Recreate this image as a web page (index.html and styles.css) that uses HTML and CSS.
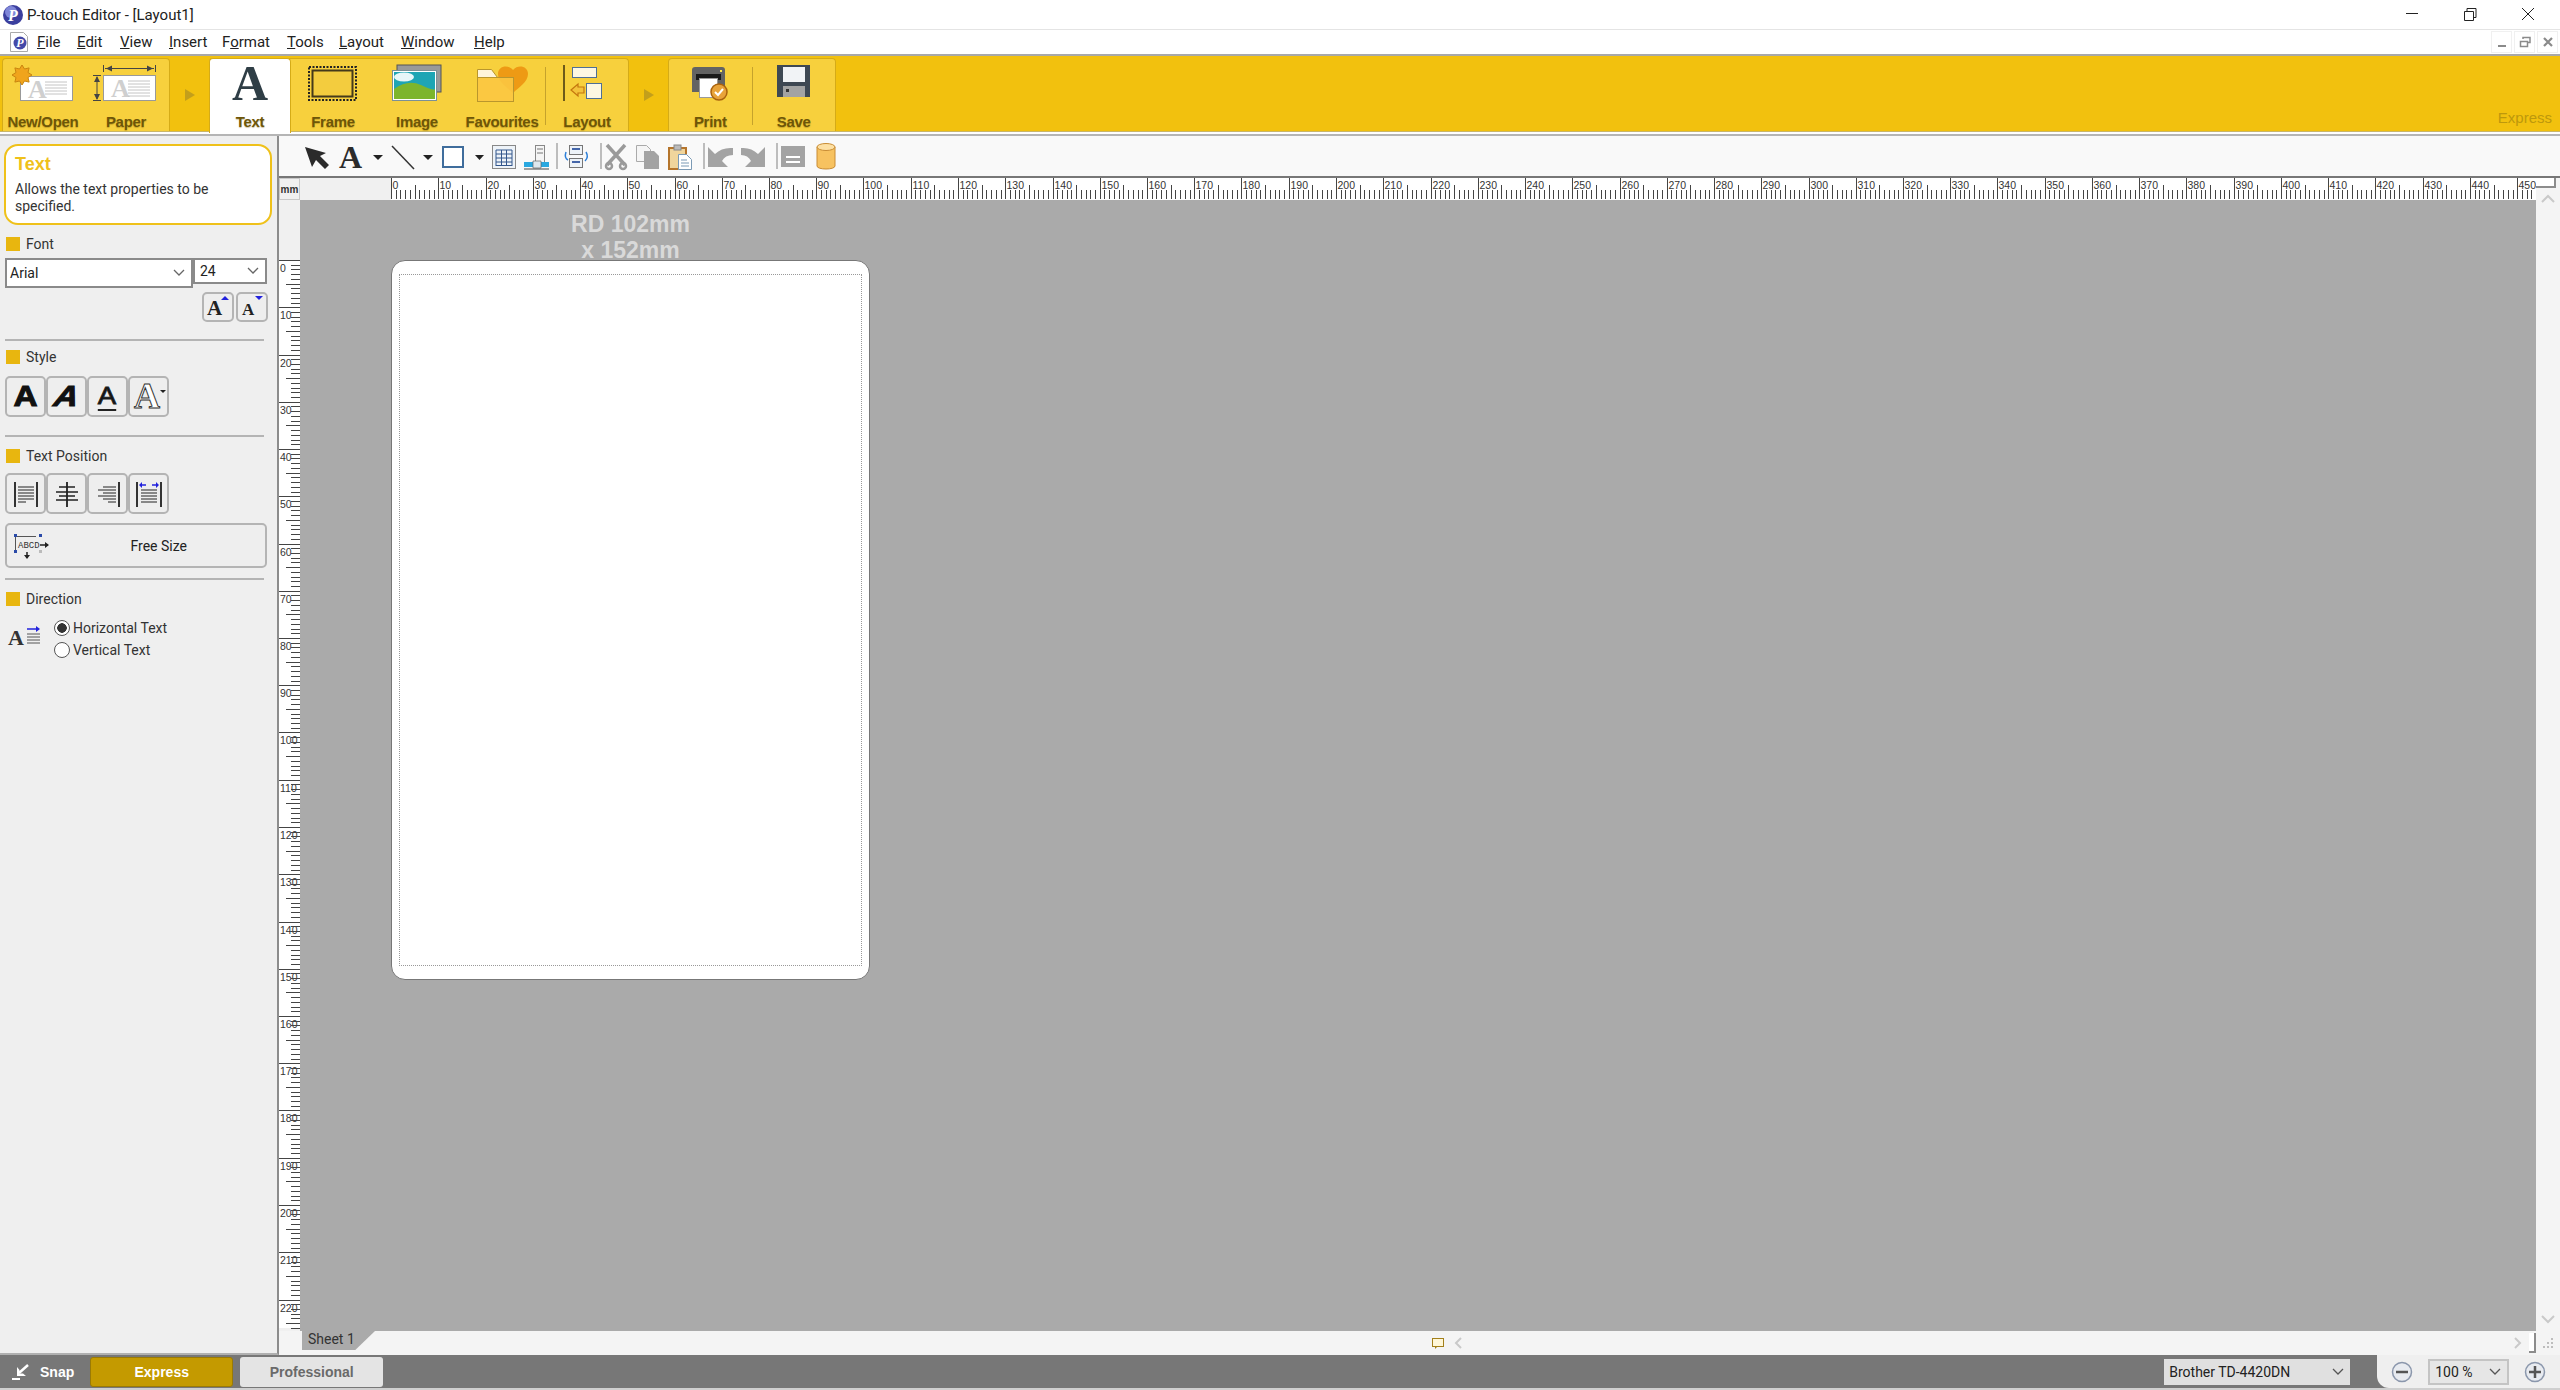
FILE: index.html
```html
<!DOCTYPE html>
<html lang="en">
<head>
    <meta charset="UTF-8">
    <title>P-touch Editor - [Layout1]</title>
    <link rel="stylesheet" href="styles.css">
</head>
<body>
    <div class="titlebar">
        <svg class="app-icon" width="22" height="22" viewBox="0 0 22 22">
            <circle cx="11" cy="11" r="10" fill="#3b3f9e"/>
            <circle cx="9" cy="8" r="6" fill="#7f86d8"/>
            <text x="11" y="17" class="app-p" text-anchor="middle">P</text>
        </svg>
        <span class="title-text">P-touch Editor - [Layout1]</span>
        <div class="win-controls">
            <svg width="58" height="29" viewBox="0 0 58 29"><path d="M23 13.5h12" stroke="#222" fill="none"/></svg>
            <svg width="58" height="29" viewBox="0 0 58 29"><path d="M23.5 11.5h9v9h-9zM26 11v-2.500h9v9h-2.500" stroke="#222" fill="none"/></svg>
            <svg width="58" height="29" viewBox="0 0 58 29"><path d="M23 8l12 12M35 8l-12 12" stroke="#222" fill="none"/></svg>
        </div>
    </div>

    <div class="menubar">
        <svg class="doc-icon" width="18" height="20" viewBox="0 0 18 20">
            <path d="M.5.500h13l4 4v15h-17z" fill="#fff" stroke="#aaa"/>
            <circle cx="10" cy="11" r="6.500" fill="#4449a8"/>
            <text x="10" y="15" class="doc-p" text-anchor="middle">P</text>
        </svg>
        <a class="menu-item menu-file"><u>F</u>ile</a>
        <a class="menu-item menu-edit"><u>E</u>dit</a>
        <a class="menu-item menu-view"><u>V</u>iew</a>
        <a class="menu-item menu-insert"><u>I</u>nsert</a>
        <a class="menu-item menu-format">F<u>o</u>rmat</a>
        <a class="menu-item menu-tools"><u>T</u>ools</a>
        <a class="menu-item menu-layout"><u>L</u>ayout</a>
        <a class="menu-item menu-window"><u>W</u>indow</a>
        <a class="menu-item"><u>H</u>elp</a>
        <div class="mdi-controls">
            <div class="mdi-btn"><svg width="12" height="12" viewBox="0 0 12 12"><path d="M2 10h8" stroke="#8a8a8a" stroke-width="2"/></svg></div>
            <div class="mdi-btn"><svg width="12" height="12" viewBox="0 0 12 12"><path d="M1.500 5.500h7v5h-7zM4 3V1.500h7v5H9" stroke="#8a8a8a" stroke-width="1.500" fill="none"/></svg></div>
            <div class="mdi-btn"><svg width="12" height="12" viewBox="0 0 12 12"><path d="M2 2l8 8M10 2l-8 8" stroke="#8a8a8a" stroke-width="2.200"/></svg></div>
        </div>
    </div>

    <div class="ribbon">
        <div class="rgroup rgroup-first">
            <div class="rbtn rbtn-new">
                <svg width="62" height="38" viewBox="0 0 62 38">
                    <rect x="8.500" y="11.500" width="52" height="24" fill="#fff" stroke="#999"/>
                    <text x="16" y="33" class="ico-a-grey">A</text>
                    <path d="M33 17h22M33 20h22M33 23h22M33 26h22M33 29h22" stroke="#c4c4c4"/>
                    <path d="M20 10l-4 2.500 1.100 4.600-4.600-1.100L10 20l-2.500-4-4.600 1.100L4 12.500 0 10l4-2.500-1.100-4.600L7.500 4 10 0l2.500 4 4.600-1.100L16 7.500z" fill="#f0a41c" stroke="#c98510"/>
                </svg>
                <span class="rbtn-label">New/Open</span>
            </div>
            <div class="rbtn rbtn-paper">
                <svg width="66" height="38" viewBox="0 0 66 38">
                    <rect x="10.500" y="10.500" width="52" height="25" fill="#fff" stroke="#999"/>
                    <text x="18" y="32" class="ico-a-grey">A</text>
                    <path d="M35 16h22M35 19h22M35 22h22M35 25h22M35 28h22M35 31h22" stroke="#c4c4c4"/>
                    <path d="M10.500 0v7M62.500 0v7M12 3.500h49M0 10.500h8M0 35.500h8M4 12v22" stroke="#444"/>
                    <path d="M13 3.500l6-3v6zM60 3.500l-6-3v6zM4 11l-3 6h6zM4 35l-3-6h6z" fill="#444"/>
                </svg>
                <span class="rbtn-label">Paper</span>
            </div>
        </div>
        <div class="rarrow"></div>
        <div class="rgroup rgroup-main">
            <div class="rbtn rbtn-text active">
                <svg width="44" height="38" viewBox="0 0 44 38"><text x="22" y="35" class="ico-big-a" text-anchor="middle">A</text></svg>
                <span class="rbtn-label">Text</span>
            </div>
            <div class="rbtn rbtn-frame">
                <svg width="52" height="38" viewBox="0 0 52 38">
                    <rect x="2" y="2" width="47" height="33" fill="none" stroke="#222" stroke-width="2" stroke-dasharray="2 1.500"/>
                    <rect x="5.500" y="5.500" width="40" height="26" fill="#f3cc3e" stroke="#44391a" stroke-width="2"/>
                </svg>
                <span class="rbtn-label">Frame</span>
            </div>
            <div class="rbtn rbtn-image">
                <svg width="52" height="38" viewBox="0 0 52 38">
                    <rect x="6" y="0" width="44" height="27" fill="#999" stroke="#555"/>
                    <rect x="1.500" y="5.500" width="44" height="30" fill="#fff" stroke="#7c9096"/>
                    <rect x="3" y="7" width="41" height="27" fill="#1ea5b4"/>
                    <path d="M3 24q14-10 27-4t14 4v10H3z" fill="#7db52c"/>
                    <ellipse cx="13" cy="12" rx="10" ry="4.500" fill="#e8f6f8"/>
                </svg>
                <span class="rbtn-label">Image</span>
            </div>
            <div class="rbtn rbtn-fav">
                <svg width="50" height="38" viewBox="0 0 50 38">
                    <path d="M.5 4.500h14l6 8h-20z" fill="#fff4d8" stroke="#b9962d"/>
                    <path d="M36 28C30 22 21 17 21 9c0-8 10-10 15-4 5-6 15-4 15 4 0 8-9 13-15 19z" fill="#ee9a14"/>
                    <rect x=".5" y="12.500" width="36" height="24" fill="#fbc741" fill-opacity=".9" stroke="#b9962d"/>
                </svg>
                <span class="rbtn-label">Favourites</span>
            </div>
            <div class="rsep"></div>
            <div class="rbtn rbtn-layout">
                <svg width="50" height="38" viewBox="0 0 50 38">
                    <path d="M2 0v36" stroke="#6e5a1a" stroke-width="2"/>
                    <rect x="10.500" y="2.500" width="24" height="10" fill="#fdf7e2" stroke="#4f6f96"/>
                    <rect x="24.500" y="18.500" width="15" height="15" fill="#fdf7e2" stroke="#4f6f96"/>
                    <path d="M9 25l7-6v3h6v6h-6v3z" fill="#f3c23a" stroke="#c4760d" stroke-width="1.200"/>
                </svg>
                <span class="rbtn-label">Layout</span>
            </div>
        </div>
        <div class="rarrow"></div>
        <div class="rgroup rgroup-end">
            <div class="rbtn">
                <svg width="38" height="38" viewBox="0 0 38 38">
                    <path d="M1 5q0-3 3-3h27q3 0 3 3v22H1z" fill="#636363"/>
                    <rect x="5" y="9" width="25" height="6" fill="#1a1a1a"/>
                    <rect x="8.500" y="13.500" width="18" height="19" fill="#fff" stroke="#9a9a9a"/>
                    <rect x="29" y="5" width="2" height="2" fill="#ffe94a"/>
                    <circle cx="28" cy="27" r="8" fill="#e8a33a" stroke="#a9620d" stroke-width="1.500"/>
                    <path d="M24 27l3 3 5-6" fill="none" stroke="#fff" stroke-width="2"/>
                </svg>
                <span class="rbtn-label">Print</span>
            </div>
            <div class="rsep"></div>
            <div class="rbtn">
                <svg width="36" height="38" viewBox="0 0 36 38">
                    <rect x="1" y="0" width="33" height="32" fill="#3e4853"/>
                    <rect x="7" y="2" width="22" height="15" fill="#f1f3f6"/>
                    <rect x="7" y="21" width="22" height="11" fill="#a3a3a3"/>
                    <rect x="10" y="24" width="3" height="3" fill="#333"/>
                </svg>
                <span class="rbtn-label">Save</span>
            </div>
        </div>
        <span class="mode-tag">Express</span>
    </div>
    <div class="ribbon-rule"></div>

    <div class="main">
        <aside class="sidepanel">
            <div class="infobox">
                <div class="info-title">Text</div>
                <p class="info-desc">Allows the text properties to be specified.</p>
            </div>

            <div class="section-head section-font"><i></i>Font</div>
            <div class="font-row">
                <div class="combo combo-font">Arial<svg class="chev" width="12" height="8" viewBox="0 0 12 8"><path d="M1 1l5 5 5-5" fill="none" stroke="#666" stroke-width="1.300"/></svg></div>
                <div class="combo combo-size">24<svg class="chev" width="12" height="8" viewBox="0 0 12 8"><path d="M1 1l5 5 5-5" fill="none" stroke="#666" stroke-width="1.300"/></svg></div>
            </div>
            <div class="size-row">
                <div class="tbtn tbtn-size">
                    <svg width="28" height="26" viewBox="0 0 28 26"><text x="3" y="21" class="ico-a-big">A</text><path d="M17 6l4-4 4 4z" fill="#2222dd"/></svg>
                </div>
                <div class="tbtn tbtn-size">
                    <svg width="28" height="26" viewBox="0 0 28 26"><text x="4" y="21" class="ico-a-small">A</text><path d="M17 2l4 4 4-4z" fill="#2222dd"/></svg>
                </div>
            </div>
            <hr class="rule rule-font">

            <div class="section-head section-style"><i></i>Style</div>
            <div class="btn-row btn-row-style">
                <div class="tbtn"><span class="style-a">A</span></div>
                <div class="tbtn"><span class="style-a style-i">A</span></div>
                <div class="tbtn"><span class="style-a style-u">A</span></div>
                <div class="tbtn">
                    <svg width="36" height="34" viewBox="0 0 36 34">
                        <text x="3" y="28" class="ico-a-outline">A</text>
                        <path d="M29 10h6l-3 3z" fill="#222"/>
                    </svg>
                </div>
            </div>
            <hr class="rule rule-style">

            <div class="section-head section-pos"><i></i>Text Position</div>
            <div class="btn-row btn-row-pos">
                <div class="tbtn">
                    <svg width="30" height="30" viewBox="0 0 30 30"><path d="M4 3v25M26 3v25" stroke="#333" stroke-width="2"/><path d="M7 8h16M7 11h16M7 14h16M7 17h16M7 20h16M7 23h8" stroke="#222"/></svg>
                </div>
                <div class="tbtn">
                    <svg width="30" height="30" viewBox="0 0 30 30"><path d="M15 3v25" stroke="#333" stroke-width="2"/><path d="M7 8h16M4 13h22M7 17h16M4 21h22" stroke="#222" stroke-width="1.500"/></svg>
                </div>
                <div class="tbtn">
                    <svg width="30" height="30" viewBox="0 0 30 30"><path d="M26 3v25" stroke="#333" stroke-width="2"/><path d="M10 8h13M5 11h18M10 14h13M5 17h18M10 20h13M15 23h8" stroke="#222"/></svg>
                </div>
                <div class="tbtn">
                    <svg width="30" height="30" viewBox="0 0 30 30"><path d="M3 3v25M27 3v25" stroke="#333" stroke-width="2"/><path d="M7 11h16M7 14h16M7 17h16M7 20h16M7 23h16" stroke="#222"/><path d="M7 6h5M18 6h5" stroke="#2222dd" stroke-width="1.500"/><path d="M5 6l3-3v6zM25 6l-3-3v6z" fill="#2222dd"/></svg>
                </div>
            </div>
            <div class="tbtn tbtn-free">
                <svg width="36" height="28" viewBox="0 0 36 28">
                    <path d="M3 4.500h20M2.500 5v13" stroke="#555"/>
                    <text x="5" y="16" class="ico-abcd">ABCD</text>
                    <path d="M27 13h8M14 20v6" stroke="#222" stroke-width="1.500"/>
                    <path d="M36 13l-4-3v6zM14 27l-3-4h6z" fill="#222"/>
                    <rect x="1" y="2" width="3" height="3" fill="#2a4aa8"/>
                    <rect x="26" y="2" width="3" height="3" fill="#2a4aa8"/>
                    <rect x="1" y="18" width="3" height="3" fill="#2a4aa8"/>
                    <rect x="26" y="18" width="3" height="3" fill="#bbb"/>
                </svg>
                <span>Free Size</span>
            </div>
            <hr class="rule rule-pos">

            <div class="section-head section-dir"><i></i>Direction</div>
            <div class="direction">
                <svg width="34" height="26" viewBox="0 0 34 26">
                    <text x="0" y="22" class="ico-a-dir">A</text>
                    <path d="M19 11h13M19 14h13M19 17h13M19 20h13" stroke="#555"/>
                    <path d="M19 6h10" stroke="#2222dd" stroke-width="1.500"/><path d="M32 6l-4-3v6z" fill="#2222dd"/>
                </svg>
                <div class="radios">
                    <label class="radio"><i class="dot checked"></i>Horizontal Text</label>
                    <label class="radio"><i class="dot"></i>Vertical Text</label>
                </div>
            </div>
        </aside>

        <div class="work">
            <div class="toolbar">
                <svg width="34" height="30" viewBox="0 0 34 30"><path d="M0 6l21 6-6 3 9 9-4 4-9-9-4 7z" fill="#2b2b2b"/></svg>
                <svg width="52" height="30" viewBox="0 0 52 30"><text x="0" y="27" class="ico-tool-a">A</text><path d="M34 14h10l-5 5z" fill="#222"/></svg>
                <svg width="51" height="30" viewBox="0 0 51 30"><path d="M1 5l22 23" stroke="#333" stroke-width="1.500"/><path d="M32 14h10l-5 5z" fill="#222"/></svg>
                <svg width="50" height="30" viewBox="0 0 50 30"><rect x="1" y="6" width="20" height="20" fill="#fff" stroke="#3f6d9c" stroke-width="2"/><path d="M33 14h9l-4.500 5z" fill="#222"/></svg>
                <svg width="32" height="30" viewBox="0 0 32 30"><rect x=".5" y="4.500" width="23" height="23" fill="#eef3f8" stroke="#888"/><path d="M4 9h16M4 13h16M4 17h16M4 21h16M4 24.500h16M4 9v16M9.500 9v16M14.500 9v16M20 9v16" stroke="#33568c" fill="none"/></svg>
                <svg width="32" height="30" viewBox="0 0 32 30"><rect x="11.500" y="4.500" width="9" height="19" fill="#f5f5f5" stroke="#888"/><path d="M13 8h6M13 12h6" stroke="#777"/><path d="M0 21h9v5H0zM16 21h9v5h-9z" fill="#2aa8e0"/><path d="M9 20h8v7H9z" fill="#dfe8ee" stroke="#666" stroke-width=".7"/><path d="M0 28h25" stroke="#444"/></svg>
                <div class="tsep"></div>
                <svg width="33" height="30" viewBox="0 0 33 30"><rect x="5.500" y="4.500" width="13" height="9" fill="#eef3f8" stroke="#777"/><rect x="5.500" y="17.500" width="13" height="9" fill="#eef3f8" stroke="#777"/><path d="M8 8h8M8 21h8" stroke="#4466aa" stroke-width="2"/><path d="M2 11q-2 6 2 8M22 11q3 5-1 9" fill="none" stroke="#2d7fd8" stroke-width="1.500"/></svg>
                <div class="tsep"></div>
                <svg width="31" height="30" viewBox="0 0 31 30"><path d="M2 4l18 20M20 4L2 24" stroke="#9a9a9a" stroke-width="3.500" fill="none"/><circle cx="4" cy="25" r="3" fill="none" stroke="#9a9a9a" stroke-width="2.500"/><circle cx="18" cy="25" r="3" fill="none" stroke="#9a9a9a" stroke-width="2.500"/></svg>
                <svg width="32" height="30" viewBox="0 0 32 30"><path d="M.5 4.500h10l4 4v12H.5z" fill="#f5f5f5" stroke="#aaa"/><path d="M8 10h10l5 5v13H8z" fill="#a3a3a3"/></svg>
                <svg width="32" height="30" viewBox="0 0 32 30"><rect x="1" y="7" width="17" height="21" fill="#f0d59c" stroke="#b5752c" stroke-width="2"/><rect x="6" y="4" width="7" height="5" fill="#bbb" stroke="#888"/><path d="M10.500 13.500h8l5 5v10h-13z" fill="#fff" stroke="#7b9ab5"/><path d="M13 19h6M13 22h8M13 25h8" stroke="#7b9ab5"/></svg>
                <div class="tsep"></div>
                <svg width="33" height="30" viewBox="0 0 33 30"><path d="M0 6v20h20l-6-6q3-6 11-6V7Q14 6 7 13z" fill="#a3a3a3"/></svg>
                <svg width="32" height="30" viewBox="0 0 32 30"><path d="M24 6v20H4l6-6q-3-6-10-6V7q10-1 17 6z" fill="#a3a3a3"/></svg>
                <div class="tsep"></div>
                <svg width="35" height="30" viewBox="0 0 35 30"><rect x="0" y="5" width="24" height="21" fill="#a3a3a3"/><path d="M5 16h14M5 21h14" stroke="#fff" stroke-width="2"/></svg>
                <svg width="22" height="30" viewBox="0 0 22 30"><path d="M1 6v19c0 4 18 4 18 0V6z" fill="#f7c260" stroke="#c98c34"/><ellipse cx="10" cy="6" rx="9" ry="3.500" fill="#fde0a4" stroke="#c98c34"/></svg>
            </div>

            <div class="editor">
                <div class="ruler-corner"><span>mm</span></div>
                <div class="hruler" id="hruler"></div>
                <div class="vscroll">
                    <div class="split-handle"></div>
                    <svg class="scroll-up" width="14" height="9" viewBox="0 0 14 9"><path d="M1 8l6-6 6 6" fill="none" stroke="#c9c9c9" stroke-width="2"/></svg>
                    <svg class="scroll-down" width="14" height="9" viewBox="0 0 14 9"><path d="M1 1l6 6 6-6" fill="none" stroke="#c9c9c9" stroke-width="2"/></svg>
                </div>
                <div class="vruler" id="vruler"></div>
                <div class="canvas">
                    <div class="sheet">
                        <div class="caption">RD 102mm<br>x 152mm</div>
                        <div class="page"><div class="printable"></div></div>
                    </div>
                </div>
                <div class="hscroll">
                    <div class="sheet-tab">Sheet 1</div>
                    <svg class="new-sheet" width="14" height="11" viewBox="0 0 14 11"><rect x=".5" y=".5" width="11" height="8" fill="#fff7d8" stroke="#a3801a"/><path d="M3 8v3l3-3" fill="#a3801a"/></svg>
                    <svg class="scroll-left" width="8" height="12" viewBox="0 0 8 12"><path d="M7 1L2 6l5 5" fill="none" stroke="#c9c9c9" stroke-width="2"/></svg>
                    <svg class="scroll-right" width="8" height="12" viewBox="0 0 8 12"><path d="M1 1l5 5-5 5" fill="none" stroke="#c9c9c9" stroke-width="2"/></svg>
                    <div class="split-handle-h"></div>
                </div>
                <div class="grip">
                    <svg width="10" height="10" viewBox="0 0 10 10"><path d="M8 0h2v2H8zM4 4h2v2H4zM8 4h2v2H8zM0 8h2v2H0zM4 8h2v2H4zM8 8h2v2H8z" fill="#bdbdbd"/></svg>
                </div>
            </div>
        </div>
    </div>

    <div class="statusbar">
        <svg class="snap-icon" width="18" height="16" viewBox="0 0 18 16"><path d="M0 15h8" stroke="#fff" stroke-width="2"/><path d="M16 1L7 9" stroke="#fff" stroke-width="2.500"/><path d="M5 3v9h9l-3-2.500H7.500V6z" fill="#fff"/></svg>
        <span class="snap-label">Snap</span>
        <div class="mode-btn mode-express">Express</div>
        <div class="mode-btn mode-pro">Professional</div>
        <div class="printer-combo">Brother TD-4420DN<svg class="chev" width="12" height="8" viewBox="0 0 12 8"><path d="M1 1l5 5 5-5" fill="none" stroke="#555" stroke-width="1.300"/></svg></div>
        <div class="zoombar">
            <svg width="22" height="22" viewBox="0 0 22 22"><circle cx="11" cy="11" r="9.500" fill="#e8ebf0" stroke="#8b97ac" stroke-width="1.500"/><path d="M5 11h12" stroke="#555" stroke-width="2.500"/></svg>
            <div class="zoom-combo">100 %<svg class="chev" width="12" height="8" viewBox="0 0 12 8"><path d="M1 1l5 5 5-5" fill="none" stroke="#555" stroke-width="1.300"/></svg></div>
            <svg width="22" height="22" viewBox="0 0 22 22"><circle cx="11" cy="11" r="9.500" fill="#e8ebf0" stroke="#8b97ac" stroke-width="1.500"/><path d="M5 11h12M11 5v12" stroke="#555" stroke-width="2.500"/></svg>
        </div>
    </div>

    <script src="ruler.js"></script>
</body>
</html>
```

FILE: styles.css
```css
* {
    box-sizing: border-box;
}
body {
    margin: 0;
    width: 2560px;
    height: 1390px;
    overflow: hidden;
    display: flex;
    flex-direction: column;
    font-family: Roboto, "Noto Sans", sans-serif;
    font-size: 14px;
    color: #222;
    background-color: #fff;
}
svg {
    flex: none;
    overflow: visible;
}

/* title and menu */
.titlebar {
    height: 30px;
    flex: none;
    display: flex;
    align-items: center;
    padding-left: 2px;
    border-bottom: 1px solid #e4e4e4;
}
.app-icon {
    margin-right: 3px;
}
.app-p {
    font: italic bold 16px "Liberation Serif", serif;
    fill: #fff;
}
.title-text {
    font-size: 15px;
}
.win-controls {
    margin-left: auto;
    display: flex;
    height: 29px;
    padding-right: 3px;
}
.menubar {
    height: 24px;
    flex: none;
    display: flex;
    align-items: center;
    padding-left: 10px;
}
.doc-p {
    font: italic bold 12px "Liberation Serif", serif;
    fill: #fff;
}
.doc-icon {
    margin-right: 9px;
}
.menu-item {
    font-size: 15px;
}
.menu-file { width: 40px; }
.menu-edit { width: 43px; }
.menu-view { width: 49px; }
.menu-insert { width: 53px; }
.menu-format { width: 65px; }
.menu-tools { width: 52px; }
.menu-layout { width: 62px; }
.menu-window { width: 73px; }
.mdi-controls {
    margin-left: auto;
    display: flex;
    gap: 2px;
    padding-right: 2px;
}
.mdi-btn {
    width: 21px;
    height: 22px;
    display: flex;
    align-items: center;
    justify-content: center;
    background-color: #fff;
    border: 1px solid #f0f0f0;
}

/* ribbon */
.ribbon {
    height: 77px;
    flex: none;
    display: flex;
    align-items: flex-end;
    padding: 0 0 0 2px;
    background-color: #f2c10e;
    border-top: 2px solid #a8a8a8;
    position: relative;
}
.rgroup {
    height: 73px;
    display: flex;
    background-color: #f7d03d;
    border: 1px solid #d5ab17;
    border-bottom: none;
    border-radius: 4px 4px 0 0;
}
.rgroup-first {
    width: 168px;
}
.rgroup-main {
    width: 420px;
}
.rgroup-end {
    width: 168px;
}
.rarrow {
    width: 39px;
    height: 73px;
    display: flex;
    align-items: center;
    justify-content: center;
}
.rarrow::before {
    content: "";
    border-left: 10px solid #c39f1b;
    border-top: 6px solid transparent;
    border-bottom: 6px solid transparent;
}
.rbtn {
    width: 83px;
    display: flex;
    flex-direction: column;
    align-items: center;
    padding-top: 6px;
}
.rbtn-new { width: 80px; }
.rbtn-paper { width: 86px; }
.rbtn-text { width: 82px; }
.rbtn-frame { width: 84px; }
.rbtn-image { width: 84px; }
.rbtn-fav { width: 86px; }
.rbtn-layout { width: 82px; }
.rbtn.active {
    background-color: #fff;
    height: 75px;
    margin: -1px 0 0 -1px;
    border-radius: 4px 4px 0 0;
    border: 1px solid #d5ab17;
    border-bottom: none;
    position: relative;
}
.rbtn-label {
    margin-top: 10px;
    font: bold 15px "Liberation Sans", sans-serif;
    letter-spacing: -.3px;
    color: #6e5608;
    text-shadow: 0 1px 1px rgba(120, 90, 0, .35);
}
.rsep {
    width: 1px;
    height: 58px;
    margin-top: 8px;
    background-color: #c5a22c;
}
.mode-tag {
    position: absolute;
    right: 8px;
    bottom: 5px;
    font: 15px "Liberation Sans", sans-serif;
    color: #bd980c;
}
.ribbon-rule {
    height: 5px;
    flex: none;
    background-color: #fff;
    border-top: 1px solid #c9b66a;
    border-bottom: 2px solid #b5b5b5;
}
.ico-a-grey {
    font: bold 26px "Liberation Serif", serif;
    fill: #cfcfcf;
}
.ico-big-a {
    font: bold 50px "Liberation Serif", serif;
    fill: #2f3e46;
}

/* left panel */
.main {
    flex: 1;
    display: flex;
    min-height: 0;
}
.sidepanel {
    width: 279px;
    flex: none;
    padding: 8px 0 0 5px;
    background-color: #efefef;
    border-right: 2px solid #8c8c8c;
    border-bottom: 2px solid #b0b0b0;
}
.infobox {
    width: 268px;
    height: 81px;
    margin-left: -1px;
    padding: 8px 9px;
    background-color: #fff;
    border: 2px solid #efc11a;
    border-radius: 14px;
}
.info-title {
    font: bold 18px "Liberation Sans", sans-serif;
    color: #efc11a;
}
.info-desc {
    margin: 6px 0 0;
    font-size: 14px;
    line-height: 17px;
    color: #333;
}
.section-head {
    display: flex;
    align-items: center;
    height: 16px;
    color: #333;
}
.section-head i {
    width: 14px;
    height: 14px;
    margin: 0 6px 0 1px;
    background-color: #e8b60f;
}
.section-font { margin-top: 11px; }
.section-style { margin-top: 8px; }
.section-pos { margin-top: 11px; }
.section-dir { margin-top: 11px; }
.font-row {
    display: flex;
    margin-top: 6px;
    align-items: flex-start;
}
.combo {
    display: flex;
    align-items: center;
    justify-content: space-between;
    padding: 0 6px 0 3px;
    background-color: #fff;
    border: 2px solid #8a8a8a;
}
.combo-font {
    width: 188px;
    height: 30px;
}
.combo-size {
    width: 74px;
    height: 26px;
    padding-left: 5px;
}
.size-row {
    display: flex;
    justify-content: flex-end;
    gap: 2px;
    width: 263px;
    margin-top: 4px;
}
.tbtn {
    width: 41px;
    height: 41px;
    display: flex;
    align-items: center;
    justify-content: center;
    background-color: #eeeeee;
    border: 2px solid #b4b4b4;
    border-radius: 5px;
}
.tbtn-size {
    width: 32px;
    height: 30px;
}
.tbtn-free {
    width: 262px;
    height: 45px;
    margin-top: 9px;
    padding: 0 78px 0 6px;
    justify-content: space-between;
}
.rule {
    width: 259px;
    height: 0;
    margin: 0;
    border: none;
    border-top: 2px solid #b4b4b4;
}
.rule-font { margin-top: 17px; }
.rule-style { margin-top: 18px; }
.rule-pos { margin-top: 10px; }
.btn-row {
    display: flex;
}
.btn-row-style { margin-top: 11px; }
.btn-row-pos { margin-top: 9px; }
.style-a {
    font: bold 29px "Liberation Sans", sans-serif;
    -webkit-text-stroke: 1px #111;
    color: #111;
    transform: scaleX(1.150);
}
.style-i {
    font-style: italic;
    transform: skewX(-10deg) scaleX(1.150);
}
.style-u {
    font-weight: normal;
    font-size: 24px;
    -webkit-text-stroke: .8px #222;
    border-bottom: 2px solid #222;
    line-height: 26px;
}
.ico-a-big {
    font: bold 21px "Liberation Serif", serif;
    fill: #222;
}
.ico-a-small {
    font: bold 17px "Liberation Serif", serif;
    fill: #222;
}
.ico-a-outline {
    font: bold 36px "Liberation Serif", serif;
    fill: #fff;
    stroke: #333;
    stroke-width: 1;
}
.ico-abcd {
    font: 9px "Liberation Mono", monospace;
    fill: #333;
}
.ico-a-dir {
    font: bold 22px "Liberation Serif", serif;
    fill: #333;
}
.ico-tool-a {
    font: bold 32px "Liberation Serif", serif;
    fill: #2b2b2b;
}
.direction {
    display: flex;
    margin-top: 7px;
    margin-left: 3px;
}
.direction svg {
    margin-top: 9px;
}
.radios {
    margin-left: 12px;
    margin-top: 3px;
}
.radio {
    display: flex;
    align-items: center;
    height: 22px;
    font-size: 14px;
    color: #333;
}
.dot {
    width: 16px;
    height: 16px;
    margin-right: 3px;
    background-color: #fff;
    border: 1.500px solid #555;
    border-radius: 50%;
}
.dot.checked {
    background: radial-gradient(circle, #333 0 4.500px, #fff 5px);
}

/* toolbar and drawing area */
.work {
    flex: 1;
    min-width: 0;
    display: flex;
    flex-direction: column;
}
.toolbar {
    height: 40px;
    flex: none;
    display: flex;
    align-items: center;
    padding-left: 26px;
    background-color: #f9f9f9;
}
.tsep {
    width: 2px;
    height: 26px;
    margin: 0 3px;
    background-color: #bdbdbd;
}
.toolbar .tsep:nth-of-type(1) {
    margin: 0 6px 0 0;
}
.editor {
    flex: 1;
    min-height: 0;
    display: grid;
    grid-template-columns: 21px 1fr 24px;
    grid-template-rows: 22px 1fr 24px;
    border-top: 2px solid #777;
}
.ruler-corner {
    display: flex;
    align-items: center;
    justify-content: center;
    background-color: #f0f0f0;
    border: 1px solid #c9c9c9;
    font: bold 10px "Liberation Sans", sans-serif;
    color: #333;
}
.hruler {
    padding-left: 91px;
    background-color: #f0f0f0;
    overflow: hidden;
}
.vruler {
    padding-top: 60px;
    background-color: #f0f0f0;
    overflow: hidden;
}
.hruler svg,
.vruler svg {
    display: block;
    background-color: #fff;
}
.ruler-label {
    font: 10.500px "Liberation Sans", sans-serif;
    fill: #333;
}
.vscroll {
    grid-row: 1 / 3;
    grid-column: 3;
    display: flex;
    flex-direction: column;
    align-items: center;
    background-color: #f4f4f4;
}
.split-handle {
    width: 20px;
    height: 10px;
    align-self: flex-start;
    border-bottom: 2px solid #8c8c8c;
    border-right: 2px solid #8c8c8c;
    background-color: #fff;
}
.scroll-up {
    margin-top: 6px;
}
.scroll-down {
    margin-top: auto;
    margin-bottom: 7px;
}
.canvas {
    padding: 0 0 0 91px;
    background-color: #aaa;
    overflow: hidden;
}
.sheet {
    width: 479px;
}
.caption {
    height: 60px;
    padding-top: 11px;
    text-align: center;
    font: bold 23px/26px "Liberation Sans", sans-serif;
    color: #d9d9d9;
}
.page {
    height: 720px;
    padding: 13px 7px;
    background-color: #fff;
    border: 1px solid #777;
    border-radius: 14px;
}
.printable {
    height: 100%;
    border: 1px dotted #999;
}
.hscroll {
    grid-column: 1 / 3;
    display: flex;
    align-items: center;
    position: relative;
    padding-left: 23px;
    background-color: #f4f4f4;
}
.sheet-tab {
    width: 73px;
    height: 19px;
    align-self: flex-start;
    padding-left: 6px;
    font-size: 14px;
    line-height: 17px;
    color: #333;
    background-color: #aaa;
    clip-path: polygon(0 0, 100% 0, 73% 100%, 0 100%);
}
.new-sheet {
    margin-left: 1057px;
}
.scroll-left {
    margin-left: 8px;
}
.scroll-right {
    margin-left: auto;
    margin-right: 7px;
}
.split-handle-h {
    width: 7px;
    height: 20px;
    border-right: 2px solid #8c8c8c;
    border-bottom: 2px solid #8c8c8c;
    background-color: #fff;
}
.grip {
    display: flex;
    align-items: center;
    justify-content: center;
    background-color: #f4f4f4;
}

/* status bar */
.statusbar {
    height: 35px;
    flex: none;
    display: flex;
    align-items: center;
    padding-left: 12px;
    background-color: #777;
    border-bottom: 2px solid #cfcfcf;
}
.snap-label {
    margin: 0 16px 0 10px;
    font: bold 14px "Liberation Sans", sans-serif;
    color: #fff;
}
.mode-btn {
    width: 143px;
    height: 30px;
    display: flex;
    align-items: center;
    justify-content: center;
    font: bold 14px "Liberation Sans", sans-serif;
    border-radius: 3px;
}
.mode-express {
    color: #fff;
    background-color: #c49a00;
    border: 1px solid #9a7a05;
}
.mode-pro {
    margin-left: 7px;
    color: #6a6a6a;
    background-color: #e4e4e4;
}
.printer-combo {
    width: 186px;
    height: 26px;
    margin-left: 1781px;
    display: flex;
    align-items: center;
    justify-content: space-between;
    padding: 0 6px 0 5px;
    font-size: 14px;
    background-color: #e0e0e0;
}
.zoombar {
    flex: 1;
    align-self: stretch;
    margin-left: 27px;
    display: flex;
    align-items: center;
    gap: 15px;
    padding-left: 14px;
    background-color: #efefef;
    border-bottom-left-radius: 12px;
}
.zoom-combo {
    width: 81px;
    height: 26px;
    display: flex;
    align-items: center;
    justify-content: space-between;
    padding: 0 6px 0 5px;
    border: 2px solid #c4c4c4;
    background-color: #e6e6e6;
}
```

FILE: ruler.js
```js
// Draws the mm rulers around the page
const MM = 4.725;

function buildRuler(el, count, horizontal) {
    const length = Math.ceil(count * MM);
    const w = horizontal ? length : 21;
    const h = horizontal ? 22 : length;
    let out = '<svg width="' + w + '" height="' + h + '" shape-rendering="crispEdges">';

    for (let i = 0; i <= count; i++) {
        const p = Math.round(i * MM) + 0.5;
        let size = 9;
        if (i % 5 === 0) size = 14;
        if (i % 10 === 0) size = 21;

        if (horizontal) {
            out += '<path d="M' + p + ' ' + (21 - size) + 'V21" stroke="#444"/>';
            if (i % 10 === 0) {
                out += '<text class="ruler-label" x="' + (p + 1) + '" y="11">' + i + '</text>';
            }
        } else {
            out += '<path d="M' + (21 - size) + ' ' + p + 'H21" stroke="#444"/>';
            if (i % 10 === 0) {
                out += '<text class="ruler-label" x="1" y="' + (p + 11) + '">' + i + '</text>';
            }
        }
    }
    el.innerHTML = out + '</svg>';
}

buildRuler(document.getElementById('hruler'), 454, true);
buildRuler(document.getElementById('vruler'), 226, false);
```
